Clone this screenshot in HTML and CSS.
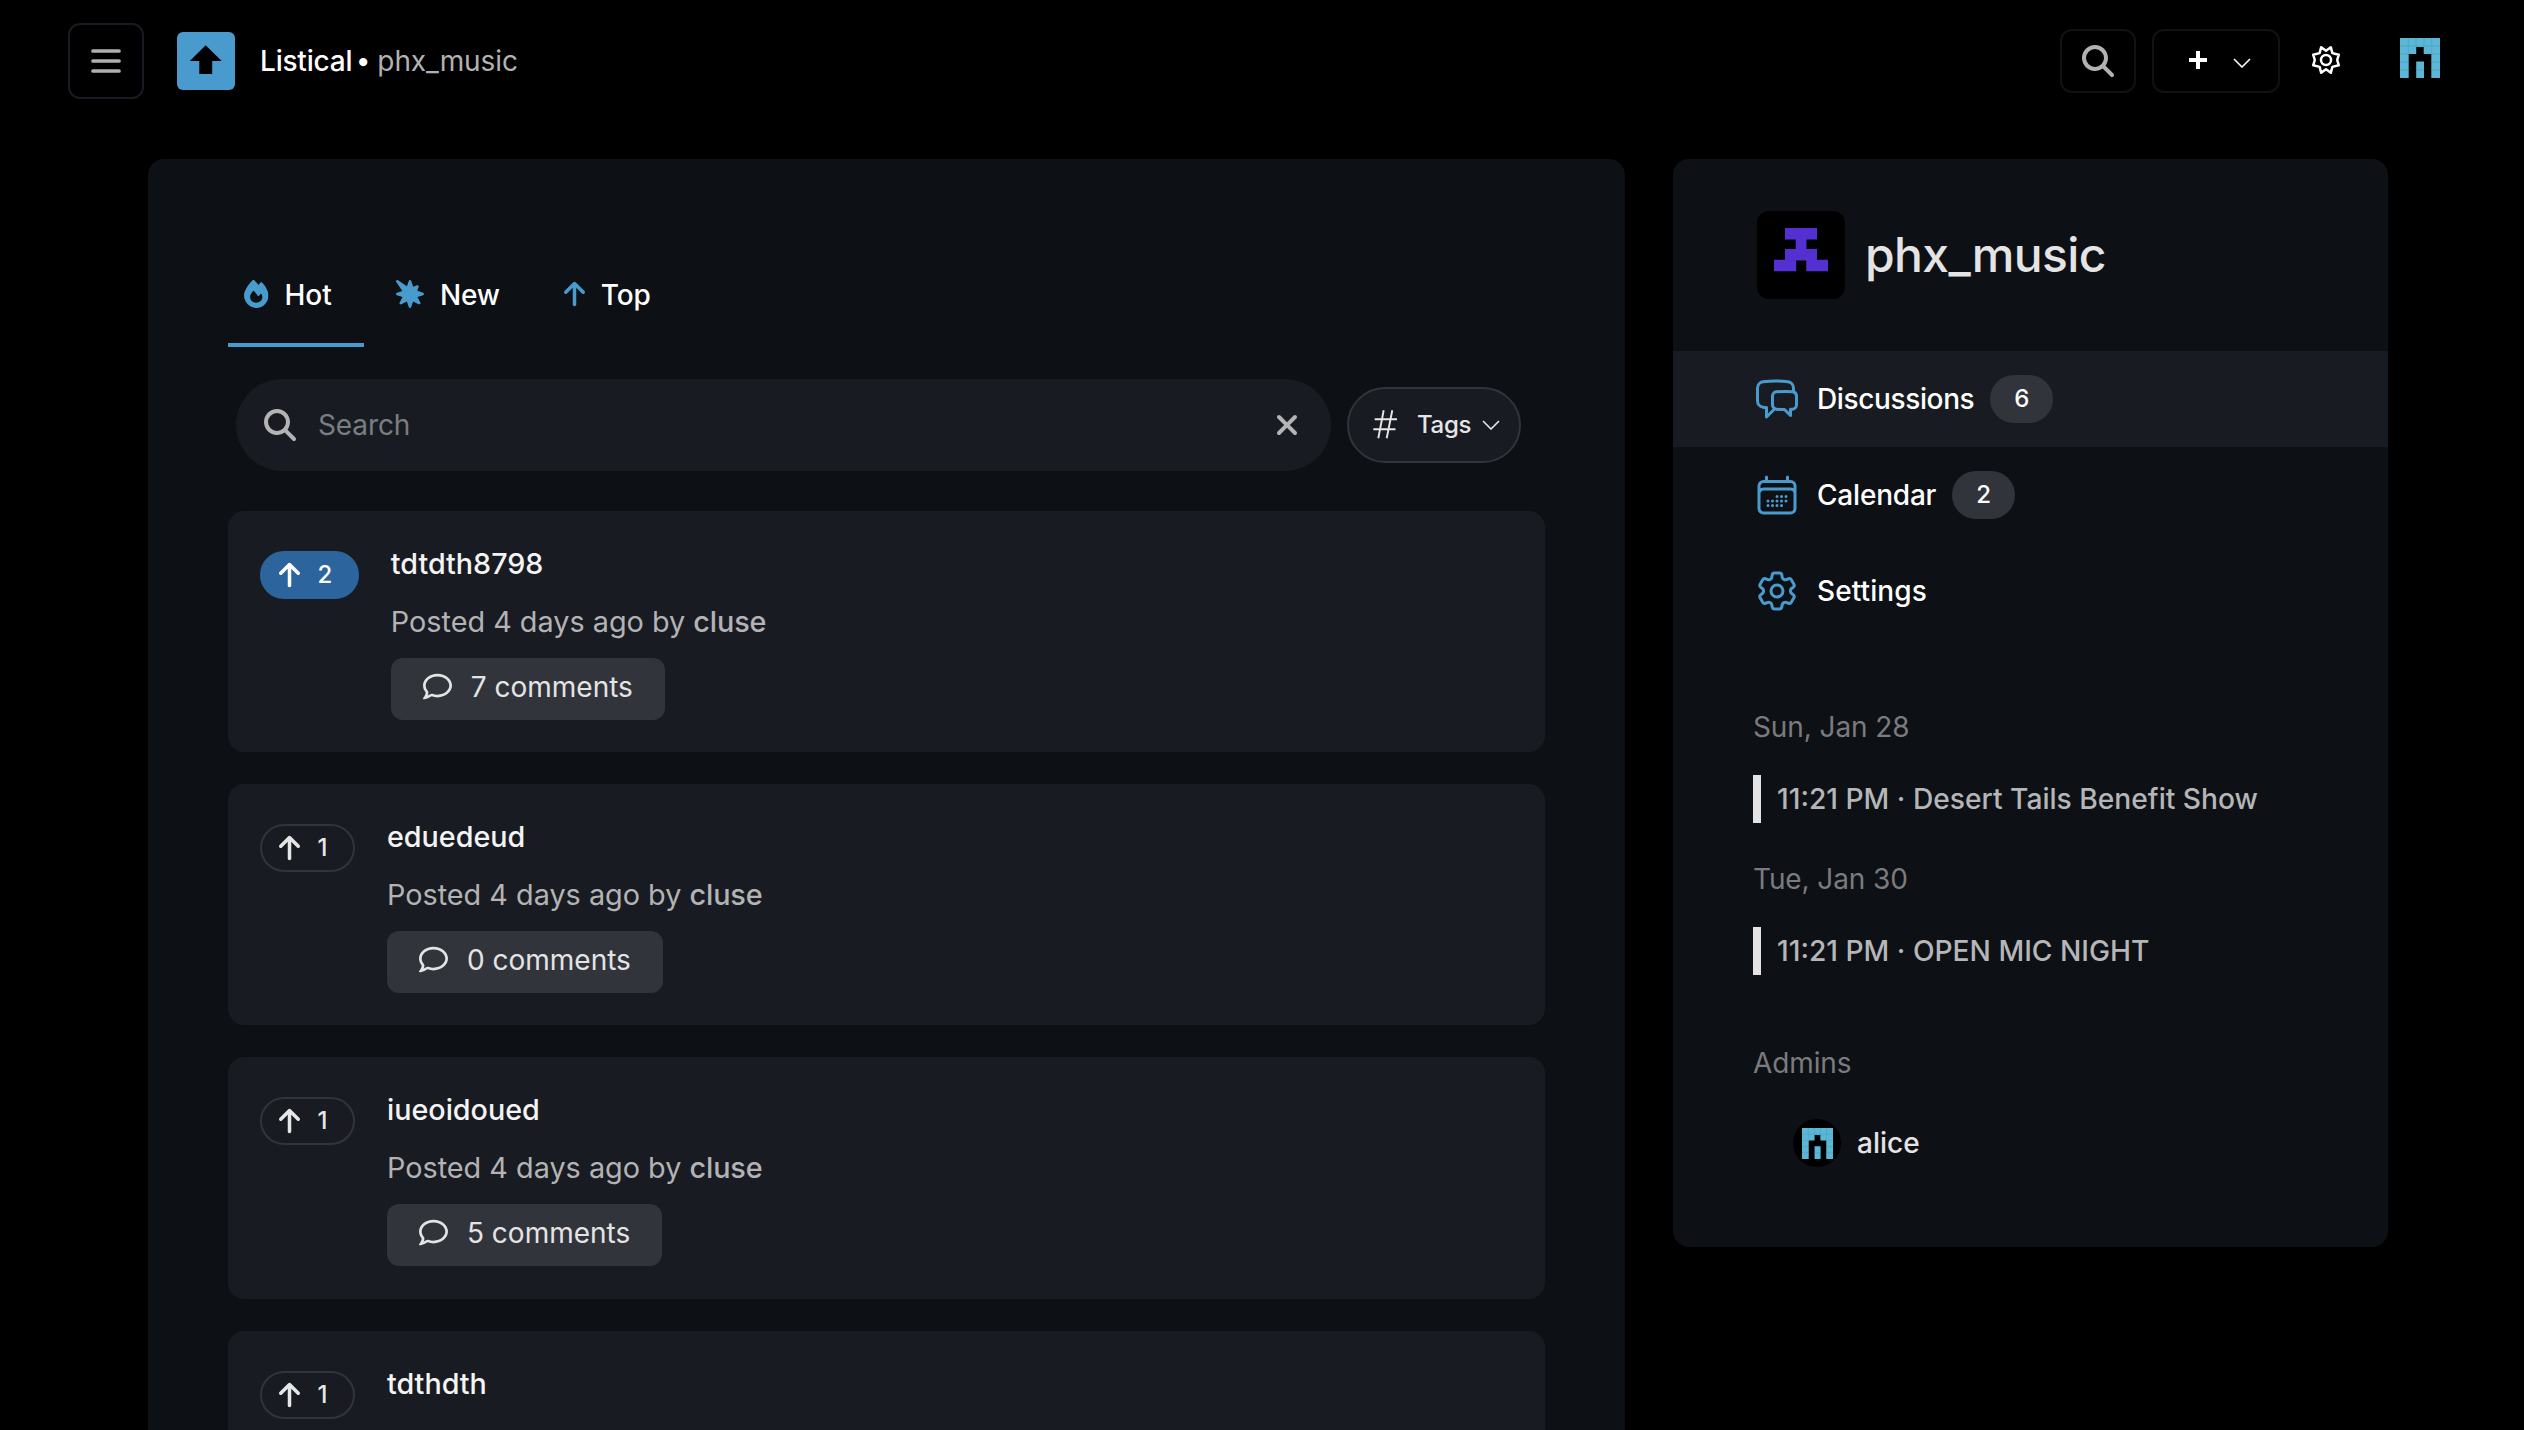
FILE: index.html
```
<!DOCTYPE html>
<html lang="en">
<head>
<meta charset="utf-8">
<title>Listical • phx_music</title>
<link rel="stylesheet" href="styles.css">
</head>
<body>
<svg class="sprite" aria-hidden="true">
  <symbol id="search" viewBox="0 0 512 512"><path d="M416 208c0 45.9-14.9 88.3-40 122.7L502.6 457.4c12.5 12.5 12.5 32.8 0 45.3s-32.8 12.5-45.3 0L330.7 376c-34.4 25.2-76.8 40-122.7 40C93.1 416 0 322.9 0 208S93.1 0 208 0S416 93.1 416 208zM208 352a144 144 0 1 0 0-288 144 144 0 1 0 0 288z"/></symbol>
  <symbol id="fire" viewBox="0 0 448 512"><path d="M159.3 5.4c7.8-7.3 19.9-7.2 27.7 .1c27.6 25.9 53.5 53.8 77.7 84c11-14.4 23.5-30.1 37-42.9c7.9-7.4 20.1-7.4 28 .1c34.6 33 63.9 76.6 84.5 118c20.3 40.8 33.8 82.5 33.8 111.9C448 404.2 348.2 512 224 512C98.4 512 0 404.1 0 276.5c0-38.4 17.8-85.3 45.4-131.7C73.3 97.7 112.7 48.6 159.3 5.4zM225.7 416c25.3 0 47.7-7 68.8-21c42.1-29.4 53.4-88.2 28.1-134.4c-4.5-9-16-9.6-22.5-2l-25.2 29.3c-6.6 7.6-18.5 7.4-24.7-.5c-16.5-21-46-58.5-62.8-79.8c-6.3-8-18.3-8.1-24.7-.1c-33.8 42.5-50.8 69.3-50.8 99.4C112 375.4 162.6 416 225.7 416z"/></symbol>
  <symbol id="burst" viewBox="0 0 512 512"><path d="M37.6 4.2C28-2.3 15.2-1.1 7 7s-9.4 21-2.8 30.5l112 163.3L16.6 233.2C6.7 236.4 0 245.6 0 256s6.7 19.6 16.6 22.8l103.1 33.4L66.8 412.8c-4.9 9.3-3.2 20.7 4.3 28.1s18.8 9.2 28.1 4.3l100.6-52.9 33.4 103.1c3.2 9.9 12.4 16.6 22.8 16.6s19.6-6.7 22.8-16.6l33.4-103.1 100.6 52.9c9.3 4.9 20.7 3.2 28.1-4.3s9.2-18.8 4.3-28.1L392.3 312.2l103.1-33.4c9.9-3.2 16.6-12.4 16.6-22.8s-6.7-19.6-16.6-22.8L388.9 198.7l25.7-70.4c3.2-8.8 1-18.6-5.6-25.2s-16.4-8.8-25.2-5.6l-70.4 25.7L278.8 16.6C275.6 6.7 266.4 0 256 0s-19.6 6.7-22.8 16.6l-32.3 99.6L37.6 4.2z"/></symbol>
  <symbol id="arrow" viewBox="0 0 384 512"><path d="M214.6 41.4c-12.5-12.5-32.8-12.5-45.3 0l-160 160c-12.5 12.5-12.5 32.8 0 45.3s32.8 12.5 45.3 0L160 141.2V448c0 17.7 14.3 32 32 32s32-14.3 32-32V141.2L329.4 246.6c12.5 12.5 32.8 12.5 45.3 0s12.5-32.8 0-45.3l-160-160z"/></symbol>
  <symbol id="xmark" viewBox="0 0 384 512"><path d="M342.6 150.6c12.5-12.5 12.5-32.8 0-45.3s-32.8-12.5-45.3 0L192 210.7 86.6 105.4c-12.5-12.5-32.8-12.5-45.3 0s-12.5 32.8 0 45.3L146.7 256 41.4 361.4c-12.5 12.5-12.5 32.8 0 45.3s32.8 12.5 45.3 0L192 301.3 297.4 406.6c12.5 12.5 32.8 12.5 45.3 0s12.5-32.8 0-45.3L237.3 256 342.6 150.6z"/></symbol>
  <symbol id="comment" viewBox="0 0 512 512"><path d="M123.6 391.3c12.9-9.4 29.6-11.8 44.6-6.4c26.5 9.6 56.2 15.1 87.8 15.1c124.7 0 208-80.5 208-160s-83.3-160-208-160S48 160.5 48 240c0 32 12.4 62.8 35.7 89.2c8.6 9.7 12.8 22.5 11.8 35.5c-1.4 18.1-5.7 34.7-11.3 49.4c17-7.9 31.1-16.7 39.4-22.7zM21.2 431.9c1.8-2.7 3.5-5.4 5.1-8.1c10-16.6 19.5-38.4 21.4-62.9C17.7 326.8 0 285.1 0 240C0 125.1 114.6 32 256 32s256 93.1 256 208s-114.6 208-256 208c-37.1 0-72.3-6.4-104.1-17.9c-11.9 8.7-31.3 20.6-54.3 30.6c-15.1 6.6-32.3 12.6-50.1 16.1c-.8 .2-1.6 .3-2.4 .5c-4.4 .8-8.7 1.5-13.2 1.9c-.2 0-.5 .1-.7 .1c-5.1 .5-10.2 .8-15.3 .8c-6.5 0-12.3-3.9-14.8-9.9c-2.5-6-1.1-12.8 3.4-17.4c4.1-4.2 7.8-8.7 11.3-13.5c1.7-2.3 3.3-4.6 4.8-6.9l.3-.5z"/></symbol>
  <symbol id="chevron" viewBox="0 0 18 10"><path d="M1 1l8 8 8-8" fill="none" stroke="currentColor" stroke-width="1.6"/></symbol>
  <symbol id="alice" viewBox="0 0 40 40">
    <path d="M0 0h40v40h-8.700V16h-7.600V9h-7.500v7H8.700v24H0zM16.200 23.500h7.800V40h-7.800z" fill="#5bb7d5"/>
    <path d="M8.300 0v16M16 0v9M24 0v9M31.700 0v16M0 8h40M0 16h8M32 16h8M0 24h8M32 24h8M0 32h8M16 32h8M32 32h8" stroke="#47a0c4" stroke-width=".7" fill="none"/>
  </symbol>
</svg>

<header class="topbar">
  <div class="brand">
    <button class="menu-button" aria-label="Menu"><svg width="30" height="24" viewBox="0 0 30 24"><path d="M2 2h26M2 12h26M2 22h26" stroke="currentColor" stroke-width="3.700" stroke-linecap="round"/></svg></button>
    <svg class="logo" width="58" height="58" viewBox="0 0 58 58"><rect width="58" height="58" rx="6" fill="#4a9bcd"/><path d="M28.700 13.300L44.700 29H35.200v13H22.300V29H12.800z"/></svg>
    <span class="site">Listical</span><span class="dot">•</span><span class="community">phx_music</span>
  </div>
  <div class="actions">
    <button class="box-button search-button" aria-label="Search"><svg width="32" height="32"><use href="#search"/></svg></button>
    <button class="box-button add-button" aria-label="Create"><svg width="18" height="18" viewBox="0 0 18 18"><path d="M9 0v18M0 9h18" stroke="currentColor" stroke-width="4"/></svg><svg class="add-chevron" width="18" height="10"><use href="#chevron"/></svg></button>
    <svg class="theme" width="30" height="30" viewBox="-15 -15 30 30"><path d="M0-9.300L4.800-12.800 6.400-6.900 12.800-5.300 11.200 0 12.800 5.300 6.400 6.900 4.800 12.800 0 9.300-4.800 12.800-6.400 6.900-12.800 5.300-11.200 0-12.800-5.300-6.400-6.900-4.800-12.800z"/><circle r="5"/></svg>
    <svg class="user" width="40" height="40"><use href="#alice"/></svg>
  </div>
</header>

<div class="columns">
  <main class="feed">
    <nav class="tabs">
      <a class="tab active"><svg width="24.500" height="28"><use href="#fire"/></svg>Hot</a>
      <a class="tab"><svg width="28" height="28"><use href="#burst"/></svg>New</a>
      <a class="tab"><svg width="21" height="28"><use href="#arrow"/></svg>Top</a>
    </nav>
    <div class="filters">
      <div class="search-field"><svg width="32" height="32"><use href="#search"/></svg><span class="placeholder">Search</span><svg width="24" height="32"><use href="#xmark"/></svg></div>
      <button class="tags"><svg width="25" height="29" viewBox="0 0 25 29"><path d="M1.700 9.300H24M.3 19.300h22.200M10.700.3L5.300 28.200M19.300.3l-5.600 27.900" stroke="currentColor" stroke-width="1.900"/></svg><span>Tags</span><svg width="18" height="10"><use href="#chevron"/></svg></button>
    </div>
    <section class="posts">
      <article class="post">
        <button class="vote voted"><svg width="21" height="28"><use href="#arrow"/></svg>2</button>
        <div class="body"><h2>tdtdth8798</h2><p>Posted 4 days ago by <b>cluse</b></p><a class="comments"><svg width="29" height="29"><use href="#comment"/></svg>7 comments</a></div>
      </article>
      <article class="post">
        <button class="vote"><svg width="21" height="28"><use href="#arrow"/></svg>1</button>
        <div class="body"><h2>eduedeud</h2><p>Posted 4 days ago by <b>cluse</b></p><a class="comments"><svg width="29" height="29"><use href="#comment"/></svg>0 comments</a></div>
      </article>
      <article class="post tall">
        <button class="vote"><svg width="21" height="28"><use href="#arrow"/></svg>1</button>
        <div class="body"><h2>iueoidoued</h2><p>Posted 4 days ago by <b>cluse</b></p><a class="comments"><svg width="29" height="29"><use href="#comment"/></svg>5 comments</a></div>
      </article>
      <article class="post last">
        <button class="vote"><svg width="21" height="28"><use href="#arrow"/></svg>1</button>
        <div class="body"><h2>tdthdth</h2><p>Posted 4 days ago by <b>cluse</b></p></div>
      </article>
    </section>
  </main>

  <aside class="sidebar">
    <div class="profile">
      <svg class="identicon" width="88" height="88" viewBox="0 0 88 88"><rect width="88" height="88" rx="12"/><path d="M28 17h32v11.500H49.500V38H60v10.700h11V60.300H49.200V49.500h-10V60.300H17V48.700h11V38h10.700V28.500H28z" fill="#5330cf"/></svg>
      <h1>phx_music</h1>
    </div>
    <nav class="links">
      <a class="link current"><svg width="48" height="48" viewBox="0 0 24 24"><path d="M20.250 8.511c.884.284 1.500 1.128 1.500 2.097v4.286c0 1.136-.847 2.100-1.980 2.193-.34.027-.68.052-1.020.072v3.091l-3-3c-1.354 0-2.694-.055-4.020-.163a2.115 2.115 0 0 1-.825-.242m9.345-8.334a2.126 2.126 0 0 0-.476-.095 48.640 48.640 0 0 0-8.048 0c-1.131.094-1.976 1.057-1.976 2.192v4.286c0 .837.46 1.580 1.155 1.951m9.345-8.334V6.637c0-1.621-1.152-3.026-2.760-3.235A48.455 48.455 0 0 0 11.250 3c-2.115 0-4.198.137-6.240.402-1.608.209-2.760 1.614-2.760 3.235v6.226c0 1.621 1.152 3.026 2.760 3.235.577.075 1.157.14 1.740.194V21l4.155-4.155"/></svg><span>Discussions</span><span class="count">6</span></a>
      <a class="link"><svg width="48" height="48" viewBox="0 0 24 24"><path d="M6.750 3v2.250M17.250 3v2.250M3 18.750V7.500a2.250 2.250 0 0 1 2.250-2.250h13.500A2.250 2.250 0 0 1 21 7.500v11.250m-18 0A2.250 2.250 0 0 0 5.250 21h13.500A2.250 2.250 0 0 0 21 18.750m-18 0v-7.500A2.250 2.250 0 0 1 5.250 9h13.500A2.250 2.250 0 0 1 21 11.250v7.500m-9-6h.008v.008H12v-.008ZM12 15h.008v.008H12V15Zm0 2.250h.008v.008H12v-.008ZM9.750 15h.008v.008H9.750V15Zm0 2.250h.008v.008H9.750v-.008ZM7.500 15h.008v.008H7.500V15Zm0 2.250h.008v.008H7.500v-.008Zm6.750-4.500h.008v.008h-.008v-.008Zm0 2.250h.008v.008h-.008V15Zm0 2.250h.008v.008h-.008v-.008Zm2.250-4.500h.008v.008H16.500v-.008Zm0 2.250h.008v.008H16.500V15Z"/></svg><span>Calendar</span><span class="count">2</span></a>
      <a class="link"><svg width="48" height="48" viewBox="0 0 24 24"><path d="M9.594 3.940c.09-.542.56-.94 1.110-.94h2.593c.55 0 1.020.398 1.110.94l.213 1.281c.063.374.313.686.645.87.074.04.147.083.22.127.325.196.72.257 1.075.124l1.217-.456a1.125 1.125 0 0 1 1.370.49l1.296 2.247a1.125 1.125 0 0 1-.26 1.431l-1.003.827c-.293.241-.438.613-.43.992a7.723 7.723 0 0 1 0 .255c-.008.378.137.75.43.991l1.004.827c.424.35.534.955.26 1.430l-1.298 2.247a1.125 1.125 0 0 1-1.369.491l-1.217-.456c-.355-.133-.75-.072-1.076.124a6.470 6.470 0 0 1-.22.128c-.331.183-.581.495-.644.869l-.213 1.281c-.09.543-.56.94-1.110.94h-2.594c-.55 0-1.019-.398-1.110-.94l-.213-1.281c-.062-.374-.312-.686-.644-.87a6.520 6.520 0 0 1-.22-.127c-.325-.196-.72-.257-1.076-.124l-1.217.456a1.125 1.125 0 0 1-1.369-.49l-1.297-2.247a1.125 1.125 0 0 1 .26-1.431l1.004-.827c.292-.24.437-.613.43-.991a6.932 6.932 0 0 1 0-.255c.007-.38-.138-.751-.43-.992l-1.004-.827a1.125 1.125 0 0 1-.26-1.430l1.297-2.247a1.125 1.125 0 0 1 1.370-.491l1.216.456c.356.133.751.072 1.076-.124.072-.044.146-.086.22-.128.332-.183.582-.495.644-.869l.214-1.280Z"/><path d="M15 12a3 3 0 1 1-6 0 3 3 0 0 1 6 0Z"/></svg><span class="plain">Settings</span></a>
    </nav>
    <section class="events">
      <h3>Sun, Jan 28</h3>
      <p>11:21 PM · Desert Tails Benefit Show</p>
      <h3>Tue, Jan 30</h3>
      <p>11:21 PM · OPEN MIC NIGHT</p>
    </section>
    <section class="admins">
      <h3>Admins</h3>
      <a class="admin"><span class="avatar"><svg width="31" height="31"><use href="#alice"/></svg></span>alice</a>
    </section>
  </aside>
</div>
</body>
</html>
```
FILE: styles.css
```
* { box-sizing: border-box; }
html, body { height: 1430px; overflow: hidden; }
body {
  margin: 0;
  background: #000;
  color: #fff;
  font: 400 28px/48px Inter, "Liberation Sans", sans-serif;
  -webkit-font-smoothing: antialiased;
}
h1, h2, h3, p { margin: 0; font-weight: inherit; font-size: inherit; }
button { margin: 0; padding: 0; background: none; color: inherit; font: inherit; }
svg { flex: none; display: block; fill: currentColor; }
.sprite { position: absolute; width: 0; height: 0; }

.topbar { display: flex; justify-content: space-between; height: 159px; padding: 23px 84px 0 68px; }
.brand { display: flex; align-items: center; height: 76px; font-weight: 500; }
.menu-button {
  display: flex; align-items: center; justify-content: center;
  width: 76px; height: 76px;
  border: 2px solid #181b22; border-radius: 12px;
  color: #b0b0b0;
}
.logo { margin: 0 25px 0 33px; color: #000; }
.dot { width: 15px; margin: 0 6px 0 4px; font-size: 26px; }
.site { letter-spacing: -.2px; }
.community { color: #b2b2b2; font-weight: 400; letter-spacing: -.1px; }
.actions { display: flex; align-items: flex-start; padding-top: 6px; }
.box-button {
  display: flex; align-items: center;
  height: 64px;
  border: 2px solid #0f1216; border-radius: 12px;
}
.search-button { width: 76px; justify-content: center; color: #b2b2b2; }
.add-button { width: 128px; margin-left: 16px; padding: 0 27px 3px 35px; justify-content: space-between; }
.add-chevron { margin-top: 6px; }
.theme { margin: 16px 0 0 31px; fill: none; stroke: currentColor; stroke-width: 2.5; stroke-linejoin: round; }
.user { margin: 9px 0 0 59px; }

.columns { display: flex; align-items: flex-start; gap: 48px; padding: 0 136px 0 148px; }
.feed { flex: none; width: 1477px; height: 1271px; padding: 84px 80px 0; background: #0d1014; border-radius: 16px 16px 0 0; overflow: hidden; }

.tabs { display: flex; font-weight: 500; }
.tab {
  display: flex; align-items: center; gap: 16px;
  height: 104px; padding: 4px 32px 0 32px;
  border-bottom: 4px solid transparent;
  letter-spacing: -.2px;
}
.tab svg { color: #4a9bcd; margin-top: -2px; }
.tab.active { width: 136px; padding: 4px 0 0 16px; border-color: #4a9bcd; letter-spacing: 0; }
.filters { display: flex; align-items: center; gap: 16px; padding: 32px 24px 40px 8px; }
.search-field {
  display: flex; align-items: center;
  flex: 1; height: 92px; padding: 0 32px 0 28px;
  border-radius: 46px; background: #181b22; color: #b4b4b6;
}
.placeholder { flex: 1; margin-left: 22px; color: #7c7d81; letter-spacing: -.1px; }
.tags {
  display: flex; align-items: center;
  width: 174px; height: 76px; padding: 0 20px 1px 24px;
  border: 2px solid #313439; border-radius: 38px;
  background: #181b22; color: #e6e6e7;
  font-size: 24px; font-weight: 500; letter-spacing: -.3px;
}
.tags span { margin: 0 11px 0 19px; line-height: 40px; }

.posts { display: flex; flex-direction: column; gap: 32px; }
.post { display: flex; flex: none; align-items: flex-start; gap: 32px; height: 241px; padding: 32px; border-radius: 16px; background: #181b22; }
.post.tall { height: 242px; }
.vote {
  display: flex; align-items: center; gap: 17.5px;
  height: 48px; margin-top: 8px; padding: 0 25.5px 1px 17px;
  border: 2px solid #31343b; border-radius: 24px;
  color: #e6e6e7; font-size: 24px; font-weight: 500; line-height: 44px;
}
.voted { border-color: #2c659e; background: #2c659e; color: #fff; padding-right: 24.5px; }
.body { display: flex; flex-direction: column; align-items: flex-start; }
.body h2 { line-height: 42px; font-size: 28.7px; font-weight: 550; color: #f4f4f4; }
.body p { margin: 16px 0 15px; line-height: 42px; font-size: 28.8px; color: #b3b3b5; }
.post.last p { margin-top: 15px; }
.body b { font-weight: 450; letter-spacing: -.1px; }
.comments {
  display: flex; align-items: center; gap: 18.5px;
  height: 62px; padding: 0 32px 5px 32.5px;
  border-radius: 12px; background: #31343b; color: #e4e4e5;
  font-weight: 400; line-height: 42px;
}

.sidebar { flex: none; width: 715px; height: 1088px; background: #0d1014; border-radius: 16px; }
.profile { display: flex; align-items: center; gap: 20px; height: 192px; padding-left: 84px; }
.identicon { fill: #000; }
.profile h1 { font-size: 48px; line-height: 64px; font-weight: 450; letter-spacing: -.6px; color: #e4e4e5; }
.link { display: flex; align-items: center; gap: 16px; height: 96px; padding-left: 80px; font-weight: 500; letter-spacing: -.2px; }
.link.current { letter-spacing: -.37px; }
.link .plain { letter-spacing: .1px; }
.link svg { fill: none; stroke: #4a9bcd; stroke-width: 1.5; stroke-linecap: round; stroke-linejoin: round; }
.current { background: #181b22; }
.count { height: 48px; padding: 0 24px; border-radius: 24px; background: #31343b; font-size: 24px; line-height: 47px; letter-spacing: 0; }
.events, .admins { padding: 64px 80px 0; }
.events h3, .admins h3 { color: #7a7b7e; letter-spacing: -.1px; }
.events p { height: 48px; margin: 24px 0 32px; padding-left: 16px; border-left: 8px solid #e3e3e6; color: #b5b6b8; font-size: 28.2px; font-weight: 450; }
.events p:last-child { margin-bottom: 0; }
.admin { display: flex; align-items: center; gap: 16px; margin-top: 32px; padding-left: 40px; font-weight: 500; color: #e4e4e5; }
.avatar { display: flex; align-items: center; justify-content: center; width: 48px; height: 48px; border-radius: 50%; background: #000; }
```
